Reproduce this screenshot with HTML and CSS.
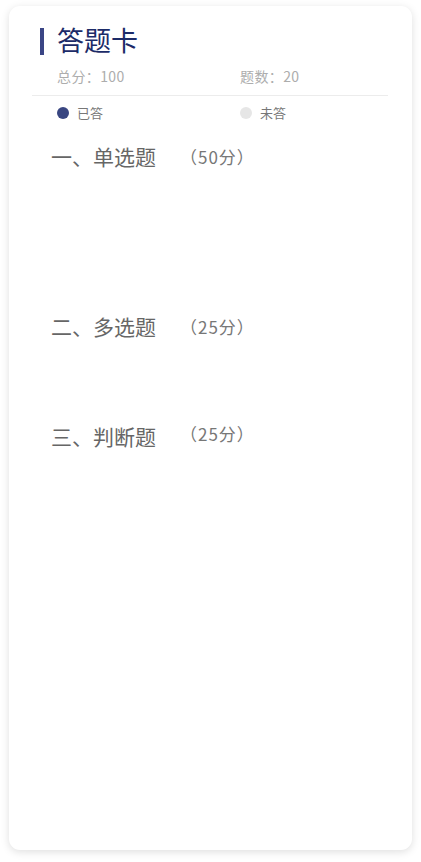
FILE: index.html
```html
<!DOCTYPE html>
<html lang="zh-CN">
<head>
<meta charset="utf-8">
<title>答题卡</title>
<link rel="stylesheet" href="styles.css">
</head>
<body>
<div class="card">
  <div class="head">
    <span class="bar"></span>
    <h1 class="title">答题卡</h1>
  </div>
  <div class="stats">
    <span>总分：100</span>
    <span>题数：20</span>
  </div>
  <div class="divider"></div>
  <div class="legend">
    <span class="item"><i class="dot done"></i>已答</span>
    <span class="item"><i class="dot todo"></i>未答</span>
  </div>
  <section class="sec sec1">
    <div class="sec-head"><span class="sec-name">一、单选题</span><span class="sec-score">（50分）</span></div>
  </section>
  <section class="sec sec2">
    <div class="sec-head"><span class="sec-name">二、多选题</span><span class="sec-score">（25分）</span></div>
  </section>
  <section class="sec sec3">
    <div class="sec-head"><span class="sec-name">三、判断题</span><span class="sec-score up">（25分）</span></div>
  </section>
</div>
</body>
</html>
```

FILE: styles.css
```css
* { box-sizing: border-box; }
html, body { margin: 0; padding: 0; background: #ffffff; }
body {
  font-family: "Noto Sans CJK SC", "Noto Sans", sans-serif;
  padding: 6px 9px 12px;
}
.card {
  height: 844px;
  background: #fff;
  border-radius: 11px;
  box-shadow: 0 2px 9px rgba(0,0,0,0.13);
  padding-top: 22px;
}
.head {
  display: flex;
  align-items: center;
  height: 27px;
  margin-left: 31px;
}
.bar {
  width: 4px;
  height: 27px;
  background: #3a4585;
}
.title {
  margin: 0 0 0 13px;
  padding-bottom: 5px;
  font-size: 27px;
  font-weight: 400;
  line-height: 27px;
  color: #1c2b68;
}
.stats {
  display: grid;
  grid-template-columns: 183px 1fr;
  padding-left: 48px;
  margin-top: 12px;
  font-size: 14px;
  letter-spacing: 0.4px;
  line-height: 18px;
  color: #adadad;
}
.divider {
  height: 1px;
  background: #ececec;
  margin: 10px 24px 0 23px;
}
.legend {
  display: grid;
  grid-template-columns: 183px 1fr;
  padding-left: 48px;
  margin-top: 8px;
  font-size: 13px;
  line-height: 18px;
  color: #777;
}
.item { display: flex; align-items: center; }
.dot {
  width: 12px;
  height: 12px;
  border-radius: 50%;
  margin-right: 8px;
}
.dot.done { background: #394681; }
.dot.todo { background: #e6e6e6; }
.sec-head {
  display: flex;
  align-items: center;
  padding-left: 42px;
  height: 24px;
}
.sec-name {
  font-size: 21px;
  color: #666;
  width: 129px;
}
.sec-score {
  font-size: 17px;
  letter-spacing: 1px;
  color: #777;
}
.sec-score.up { padding-bottom: 6px; }
.sec1 { margin-top: 22px; height: 170px; }
.sec2 { height: 110px; }
```
